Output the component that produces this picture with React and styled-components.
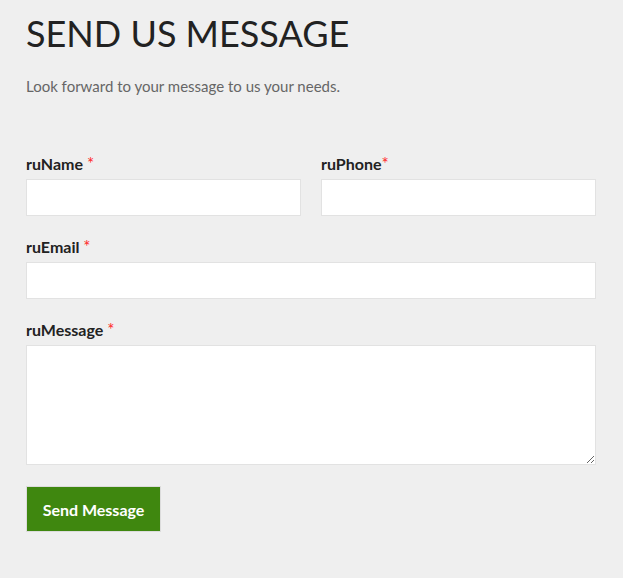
import React from 'react'
import styled, { createGlobalStyle } from 'styled-components'

const GlobalStyle = createGlobalStyle`
  html, body {
    margin: 0;
    padding: 0;
    background: #efefef;
  }
  body {
    font-family: Lato, "Liberation Sans", sans-serif;
  }
`;

function App() {
    return (
        <>
            <GlobalStyle />
            <Wrapper>
                <Title>SEND US MESSAGE</Title>
                <Subtitle>Look forward to your message to us your needs.</Subtitle>
                <Form onSubmit={e => e.preventDefault()}>
                    <Row>
                        <Field>
                            <Label>ruName <Req>*</Req></Label>
                            <Input type="text" />
                        </Field>
                        <Field>
                            <Label>ruPhone<Req>*</Req></Label>
                            <Input type="tel" />
                        </Field>
                    </Row>
                    <Field>
                        <Label>ruEmail <Req>*</Req></Label>
                        <Input type="email" />
                    </Field>
                    <Field>
                        <Label>ruMessage <Req>*</Req></Label>
                        <TextArea />
                    </Field>
                    <Button type="submit">Send Message</Button>
                </Form>
            </Wrapper>
        </>
    )
}

const Wrapper = styled.div`
    padding: 10px 27px 40px 26px;
    color: #222;
`;
const Title = styled.h2`
    margin: 0;
    font-size: 36px;
    font-weight: 400;
    line-height: 46px;
    letter-spacing: 0;
    color: #222;
`;
const Subtitle = styled.p`
    margin: 20px 0 0;
    font-size: 15px;
    line-height: 20px;
    color: #666;
`;
const Form = styled.form`
    margin-top: 58px;
    display: flex;
    flex-direction: column;
    gap: 21px;
`;
const Row = styled.div`
    display: grid;
    grid-template-columns: 1fr 1fr;
    gap: 20px;
`;
const Field = styled.div`
    display: flex;
    flex-direction: column;
`;
const Label = styled.label`
    font-size: 16px;
    font-weight: 700;
    line-height: 20px;
    color: #222;
    margin-bottom: 5px;
`;
const Req = styled.span`
    color: #ff2a2a;
    font-weight: 400;
    font-size: 17px;
`;
const Input = styled.input`
    box-sizing: border-box;
    width: 100%;
    height: 37px;
    border: 1px solid #e2e2e2;
    background: #fff;
    outline: none;
    padding: 0 10px;
`;
const TextArea = styled.textarea`
    box-sizing: border-box;
    width: 100%;
    height: 120px;
    border: 1px solid #e2e2e2;
    background: #fff;
    outline: none;
    padding: 10px;
    resize: vertical;
`;
const Button = styled.button`
    align-self: flex-start;
    width: 135px;
    height: 46px;
    background: #3f870f;
    color: #fff;
    border: 1px solid #dcdcdc;
    font-family: Lato, "Liberation Sans", sans-serif;
    font-size: 16px;
    font-weight: 700;
    cursor: pointer;
`;

export default App
